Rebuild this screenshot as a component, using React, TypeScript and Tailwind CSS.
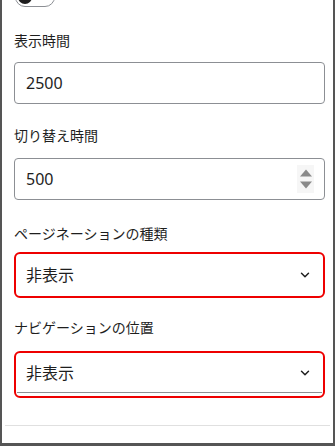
import { ChevronDown } from "lucide-react";

const font = { fontFamily: '"Noto Sans", "Noto Sans CJK JP", sans-serif' };

const Label = ({ text, className }: { text: string; className: string }) => (
  <div className={`text-[14px] leading-[20px] text-[#1e1e1e] ${className}`}>
    {text}
  </div>
);

const Spinner = () => (
  <div className="flex flex-col items-center justify-center gap-[4px] w-[17px] h-[28px] bg-[#f6f6f6]">
    <svg width="14" height="8" viewBox="0 0 14 8">
      <path d="M7 0.5 L13 7.5 L1 7.5 Z" fill="#8a8a8a" />
    </svg>
    <svg width="14" height="8" viewBox="0 0 14 8">
      <path d="M1 0.5 L13 0.5 L7 7.5 Z" fill="#8a8a8a" />
    </svg>
  </div>
);

const App = () => {
  return (
    <div
      className="w-[335px] h-[446px] bg-white border-l-2 border-r-2 border-b-[3px] border-[#555555] overflow-hidden flex flex-col"
      style={font}
    >
      <div className="ml-[13px] -mt-[13px] w-[40px] h-[20px] rounded-full border border-[#8c8f94] flex items-center px-[2px] shrink-0">
        <div className="w-[14px] h-[14px] rounded-full bg-[#1e1e1e]" />
      </div>

      <div className="pl-[12px] pr-[8px] flex flex-col">
        <Label text="表示時間" className="mt-[24px]" />
        <div className="mt-[11px] h-[42px] rounded-[4px] border border-[#8c8f94] flex items-center px-[11px] text-[16px] text-[#1e1e1e]">
          2500
        </div>

        <Label text="切り替え時間" className="mt-[22px]" />
        <div className="mt-[12px] h-[42px] rounded-[4px] border border-[#8c8f94] flex items-center justify-between pl-[11px] pr-[10px] text-[16px] text-[#1e1e1e]">
          <span>500</span>
          <Spinner />
        </div>

        <Label text="ページネーションの種類" className="mt-[24px]" />
        <div className="mt-[8px] h-[46px] rounded-[6px] border-2 border-[#ee0000] flex items-center justify-between pl-[10px] pr-[11px] text-[16px] text-[#1e1e1e]">
          <span>非表示</span>
          <ChevronDown size={14} strokeWidth={2.5} className="text-[#1e1e1e]" />
        </div>

        <Label text="ナビゲーションの位置" className="mt-[20px]" />
        <div className="mt-[13px] h-[47px] rounded-[6px] border-2 border-[#ee0000] flex flex-col">
          <div className="h-[40px] mx-px border-b border-[#8c8f94] flex items-center justify-between pl-[9px] pr-[10px] text-[16px] text-[#1e1e1e]">
            <span>非表示</span>
            <ChevronDown size={14} strokeWidth={2.5} className="text-[#1e1e1e]" />
          </div>
        </div>
      </div>

      <div className="mt-[27px] mx-[3px] h-px bg-[#e0e0e0]" />
    </div>
  );
};

export default App;
